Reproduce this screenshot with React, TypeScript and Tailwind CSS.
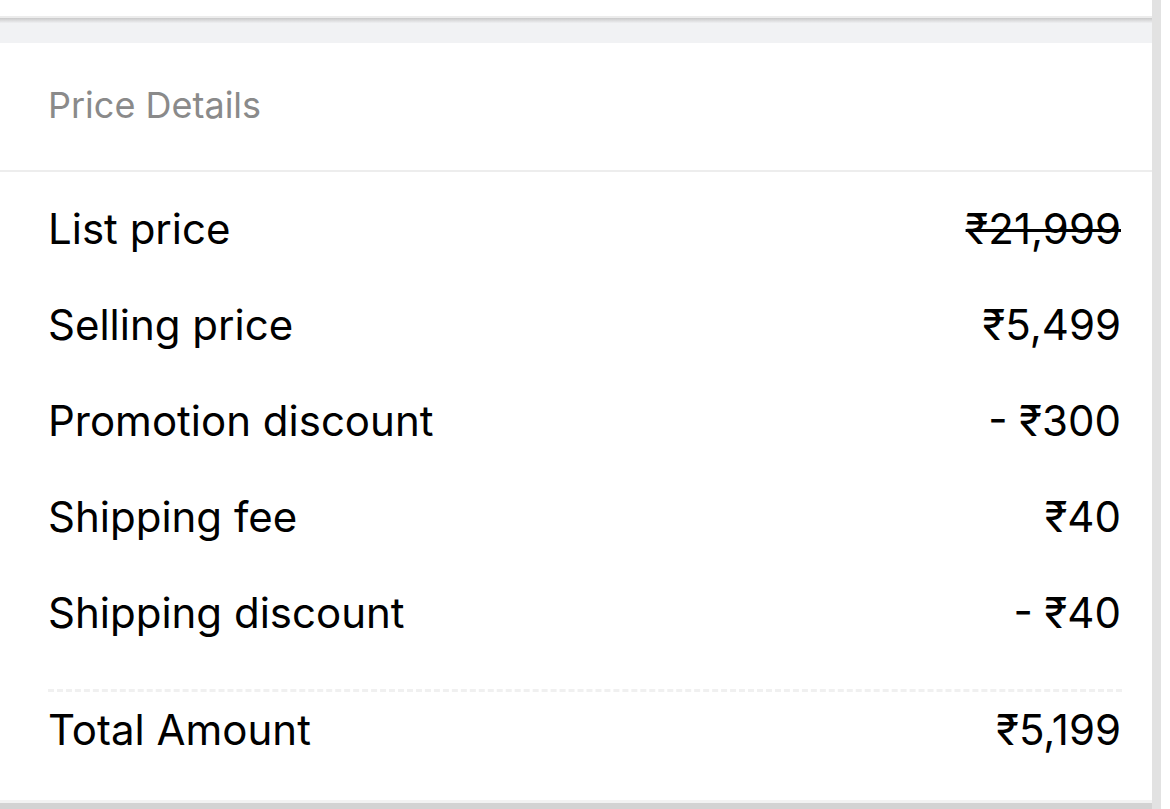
import React from 'react';

// Price rows shown in the summary card
const rows: { label: string; value: string; strike?: boolean }[] = [
  { label: 'List price', value: '₹21,999', strike: true },
  { label: 'Selling price', value: '₹5,499' },
  { label: 'Promotion discount', value: '- ₹300' },
  { label: 'Shipping fee', value: '₹40' },
  { label: 'Shipping discount', value: '- ₹40' },
];

export default function App() {
  return (
    <div
      className="flex h-[809px] w-[1170px] overflow-hidden bg-white text-black"
      style={{ fontFamily: 'Inter, "Noto Sans", sans-serif' }}
    >
      <div className="flex w-[1152px] flex-col">
        {/* previous card bottom edge */}
        <div className="h-4 bg-white" />
        <div className="h-[2px] bg-[#ececec]" />
        <div className="h-[5px] bg-gradient-to-b from-[#c9c9c9] to-[#eeeff1]" />
        <div className="h-[20px] bg-[#f1f2f4]" />

        {/* price details card */}
        <div className="flex flex-1 flex-col bg-white">
          <div className="flex h-[127px] items-center px-12 pb-[4px]">
            <span className="text-[36px] leading-none text-[#8a8a8a]">Price Details</span>
          </div>
          <div className="h-[2px] bg-[#ededed]" />

          <div className="flex flex-col px-12 pr-[31px] pt-[9px]">
            {rows.map((r) => (
              <div key={r.label} className="flex h-24 items-center justify-between text-[42px] leading-none">
                <span>{r.label}</span>
                <span className={r.strike ? 'line-through decoration-[3px]' : ''}>{r.value}</span>
              </div>
            ))}
          </div>

          <div className="mx-12 mr-[30px] mt-[28px] border-t-[3px] border-dashed border-[#f0f0f0]" />

          <div className="flex h-[76px] items-center justify-between px-12 pr-[31px] text-[42px] leading-none">
            <span>Total Amount</span>
            <span>₹5,199</span>
          </div>
          <div className="flex-1" />
        </div>

        {/* bottom edge */}
        <div className="h-[3px] bg-[#f3f3f3]" />
        <div className="h-[6px] bg-[#d3d3d3]" />
      </div>

      {/* right rail */}
      <div className="w-[9px] bg-[#e2e2e2]" />
      <div className="flex-1 bg-white" />
    </div>
  );
}
